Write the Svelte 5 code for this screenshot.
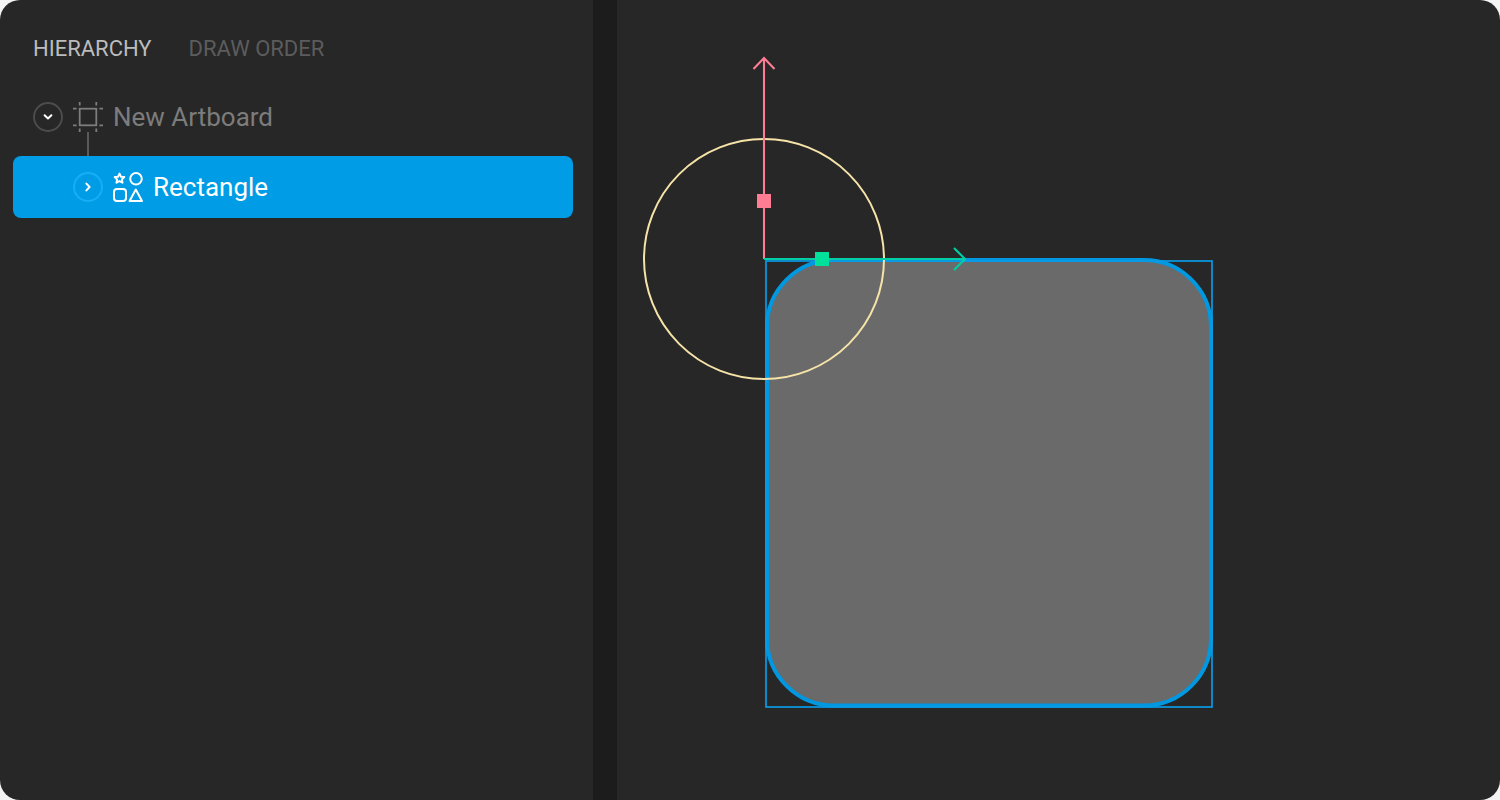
<script lang="ts">
	// Canvas drawing is in page coordinates, the viewBox is shifted by the canvas' left edge
	const canvasLeft = 617;
</script>

<div class="window">
	<aside class="hierarchy">
		<nav class="tabs">
			<span class="tab active">HIERARCHY</span>
			<span class="tab">DRAW ORDER</span>
		</nav>

		<div class="tree">
			<div class="row artboard">
				<span class="toggle">
					<svg width="10" height="8" viewBox="0 0 10 8" fill="none">
						<path d="M1.6 2.2 5 5.4 8.4 2.2" stroke="#fff" stroke-width="2" stroke-linecap="round" stroke-linejoin="round" />
					</svg>
				</span>
				<svg class="node-icon" width="30" height="30" viewBox="0 0 30 30" fill="none" stroke="#7d7d7d" stroke-width="1.8">
					<rect x="6.7" y="6.7" width="16.6" height="16.6" />
					<path d="M6.7 0v3.6M23.3 0v3.6M6.7 26.4V30M23.3 26.4V30M0 6.7h3.6M0 23.3h3.6M26.4 6.7H30M26.4 23.3H30" />
				</svg>
				<span class="label">New Artboard</span>
				<span class="connector"></span>
			</div>

			<div class="row selected">
				<span class="toggle">
					<svg width="8" height="10" viewBox="0 0 8 10" fill="none">
						<path d="M2.4 1.6 5.6 5 2.4 8.4" stroke="#fff" stroke-width="2" stroke-linecap="round" stroke-linejoin="round" />
					</svg>
				</span>
				<svg class="node-icon" width="30" height="30" viewBox="0 0 30 30" fill="none" stroke="#fff" stroke-width="2">
					<path d="M6.5 1.6 8 4.7l3.3.4-2.4 2.3.6 3.3-3-1.6-3 1.6.6-3.3L1.7 5.1 5 4.7Z" stroke-linejoin="round" />
					<circle cx="23" cy="6.8" r="5.8" />
					<rect x="1" y="17" width="12" height="12" rx="3" />
					<path d="M22.8 17.6 29 29H16.6Z" stroke-linejoin="round" />
				</svg>
				<span class="label">Rectangle</span>
			</div>
		</div>
	</aside>

	<div class="divider"></div>

	<main class="canvas">
		<svg width="883" height="800" viewBox="{canvasLeft} 0 883 800" fill="none">
			<!-- shape -->
			<rect x="767" y="260" width="444" height="445.5" rx="67" fill="#6a6a6a" stroke="#0098e0" stroke-width="4" />
			<!-- bounds -->
			<rect x="766" y="261" width="446" height="446" stroke="#0a9be6" stroke-width="1.7" />

			<!-- rotation ring -->
			<circle cx="764" cy="259" r="120" stroke="#f5e3a8" stroke-width="2" />

			<!-- y axis -->
			<path d="M764 259V58M753.5 69 764 58l10.5 11" stroke="#ff7d93" stroke-width="2.1" />
			<rect x="757" y="194" width="14" height="14" fill="#ff7d93" />

			<!-- x axis -->
			<path d="M764 259H965M954 248l11 11-11 11" stroke="#00cfa5" stroke-width="2.1" />
			<rect x="815" y="252" width="14" height="14" fill="#00e09a" />
		</svg>
	</main>
</div>

<style>
	:global(body) {
		background: #f4f4f4;
	}

	.window {
		display: flex;
		width: 1500px;
		height: 800px;
		overflow: hidden;
		border-radius: 20px;
		background: #272727;
		font-family: Roboto, sans-serif;
	}

	.hierarchy {
		width: 593px;
		flex-shrink: 0;
		padding: 37px 20px 0 13px;
		box-sizing: border-box;
	}

	.tabs {
		display: flex;
		gap: 37px;
		padding-left: 20px;
		margin-bottom: 29px;
	}

	.tab {
		font-size: 22px;
		line-height: 24px;
		color: #5c5c5c;
	}

	.tab.active {
		color: #bcbcbc;
	}

	.tree {
		display: flex;
		flex-direction: column;
		gap: 8px;
	}

	.row {
		position: relative;
		display: flex;
		align-items: center;
		height: 62px;
	}

	.artboard {
		padding-left: 20px;
		margin-top: -4px;
	}

	.selected {
		padding-left: 60px;
		border-radius: 8px;
		background: #009ce6;
	}

	.toggle {
		display: flex;
		align-items: center;
		justify-content: center;
		width: 26px;
		height: 26px;
		border: 2px solid #4c4c4c;
		border-radius: 50%;
	}

	.selected .toggle {
		border-color: #17aef5;
	}

	.node-icon {
		margin-left: 10px;
	}

	.label {
		margin-left: 10px;
		font-size: 26px;
		color: #7c7c7c;
	}

	.selected .label {
		color: #fff;
	}

	.connector {
		position: absolute;
		left: 74px;
		top: 46px;
		width: 2px;
		height: 24px;
		background: #5a5a5a;
	}

	.divider {
		width: 24px;
		flex-shrink: 0;
		background: #1c1c1c;
	}

	.canvas {
		flex: 1;
		min-width: 0;
	}

	.canvas svg {
		display: block;
	}
</style>
